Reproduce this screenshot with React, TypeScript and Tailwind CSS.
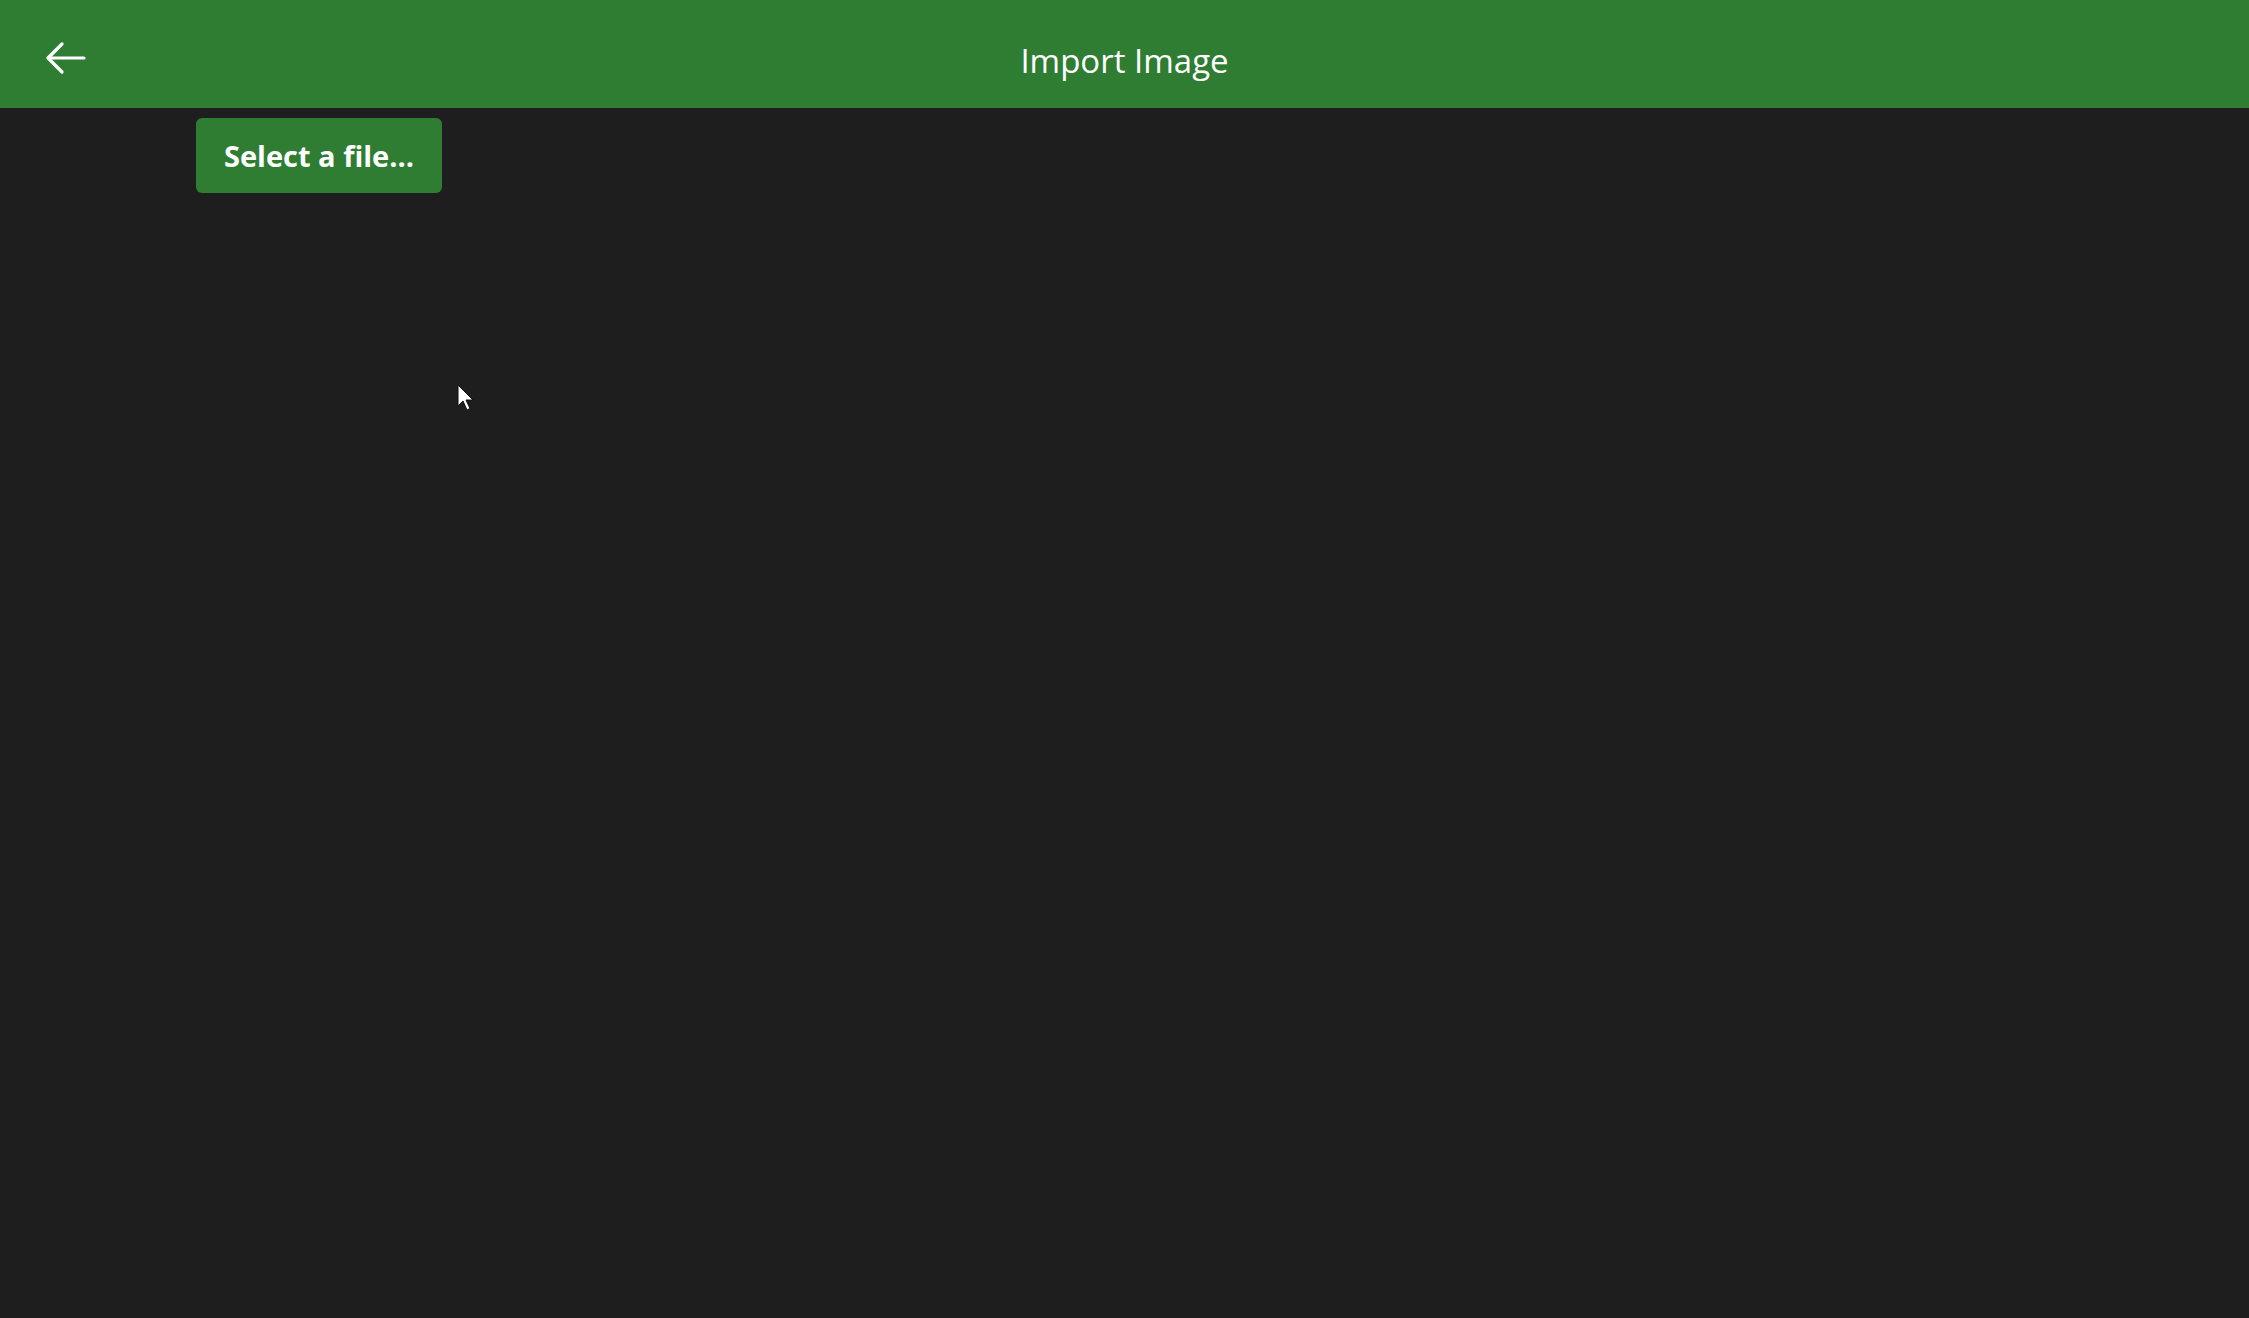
import React from 'react';

function BackArrow() {
  return (
    <svg width="40" height="32" viewBox="0 0 40 32" fill="none" stroke="white" strokeWidth="3.2" strokeLinecap="round" strokeLinejoin="round">
      <path d="M38 16H3" />
      <path d="M16 2L2 16l14 14" />
    </svg>
  );
}

function Cursor() {
  return (
    <svg width="20" height="30" viewBox="0 0 20 30" className="absolute left-[457px] top-[384px]">
      <path d="M1 1v21l5-5 4 9 3-1.5-4-8.5h7z" fill="white" stroke="#111" strokeWidth="1" />
    </svg>
  );
}

function App() {
  return (
    <div className="relative min-h-screen h-[1318px] bg-[#1e1e1e] font-['Open_Sans',_'Noto_Sans',_sans-serif] overflow-hidden">
      <header className="relative h-[108px] bg-[#2e7d32] flex items-center justify-center">
        <button className="absolute left-[46px] top-[42px]">
          <BackArrow />
        </button>
        <h1 className="text-white text-[33px] font-medium leading-none mt-[12px]">Import Image</h1>
      </header>

      <main className="pl-[196px] pt-[10px]">
        <button className="w-[246px] h-[75px] rounded-[6px] bg-[#2e7d32] text-white font-bold text-[29px]">
          Select a file...
        </button>
      </main>

      <Cursor />
    </div>
  );
}

export default App;
